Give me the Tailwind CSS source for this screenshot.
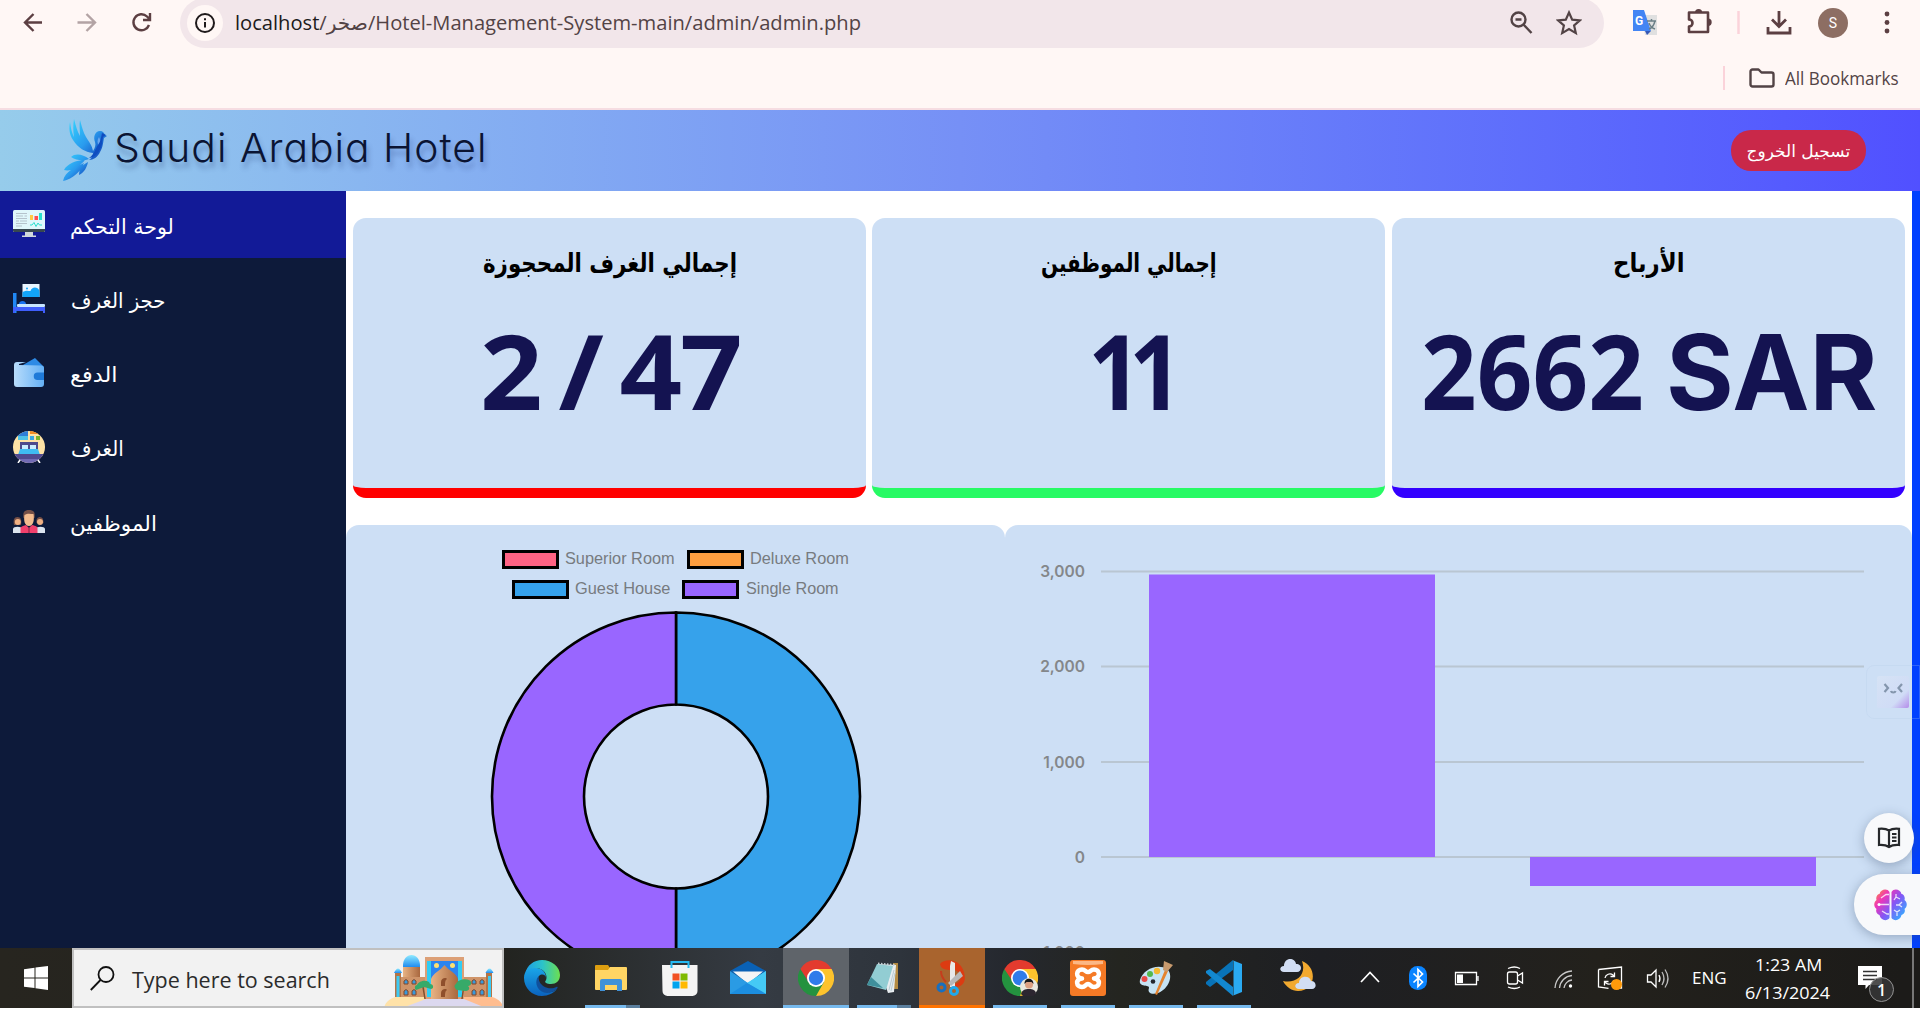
<!DOCTYPE html>
<html lang="ar" dir="ltr">
<head>
<meta charset="utf-8">
<title>Saudi Arabia Hotel</title>
<script src="https://cdn.jsdelivr.net/npm/@tailwindcss/browser@4"></script>
</head>
<body class="w-[1920px] h-[1018px] overflow-hidden bg-white font-['Open_Sans','Noto_Sans','DejaVu_Sans',sans-serif] flex flex-col">

<!-- Browser toolbar -->
<div class="h-[110px] shrink-0 bg-[#fff7f5] border-b-2 border-[#f6dde2] flex flex-col overflow-hidden">
  <div class="h-12 flex items-start">
    <svg class="w-[180px] h-12 shrink-0" viewBox="0 0 180 48" fill="none" stroke="#5c3f42" stroke-width="2.4">
      <path d="M42 22.500H26M33.500 14l-8.500 8.500 8.500 8.500"/>
      <path stroke="#b3a3a4" d="M77.500 22.500H94M86.500 14l8.500 8.500-8.500 8.500"/>
      <path d="M149 25a8 8 0 1 1-2-8.500l3 3M150 13v7h-7"/>
    </svg>
    <div class="w-[1424px] h-[50px] -mt-0.5 shrink-0 rounded-[25px] bg-[#f2e6ea] flex items-center">
      <div class="ml-[7px] size-9 rounded-full bg-[#fff7f5] flex items-center justify-center">
        <svg class="size-5" viewBox="0 0 20 20" fill="none" stroke="#1f1a1b" stroke-width="2"><circle cx="10" cy="10" r="9"/><path d="M10 9v5.500M10 5.200v2"/></svg>
      </div>
      <div data-fit class="ml-[12px] w-[626px] text-[20px] leading-[28px] text-[#524345]"><span class="text-[#201a1b]">localhost</span>/صخر/Hotel-Management-System-main/admin/admin.php</div>
      <svg class="ml-[649px] w-6 h-6" viewBox="0 0 24 24" fill="none" stroke="#524345" stroke-width="2.400"><circle cx="8.500" cy="8.500" r="7"/><path d="M13.500 13.500l8 8.500M5.500 8.500h6"/></svg>
      <svg class="ml-[22px] w-[26px] h-[26px]" viewBox="0 0 26 26" fill="none" stroke="#524345" stroke-width="2.200"><path d="M13 2.500l3.200 7.100 7.700.7-5.800 5.200 1.700 7.600L13 19.100l-6.800 4 1.700-7.600-5.800-5.200 7.700-.7z"/></svg>
    </div>
    <svg class="w-[316px] h-12 shrink-0" viewBox="1604 0 316 48">
      <path fill="#e0e0e0" d="M1641 15h16v20h-12z"/><path fill="#4285f4" d="M1633 10h11l7 21h-18z"/><path fill="#3557b5" d="M1645 31h6l-4 4z"/>
      <path fill="none" stroke="#6b7f86" stroke-width="1.500" d="M1647 21h9M1651.500 19v2M1655 21c-1 4-3 7-6 8M1649 23c1 3 3 5 6 6"/>
      <text x="1635" y="25" font-size="12" font-weight="700" fill="#fff" font-family="Roboto">G</text>
      <path fill="none" stroke="#5c3f42" stroke-width="2.600" stroke-linejoin="round" d="M1689 12.500h19V32h-19v-5.500a3.500 3.500 0 0 0 0-7z"/>
      <path fill="#5c3f42" d="M1695 12.500a3.600 3.600 0 0 1 7.200 0zM1708 18.500a3.700 3.700 0 0 1 0 7.400z"/>
      <path stroke="#fbd3da" stroke-width="2.500" d="M1738.500 11v23"/>
      <path fill="none" stroke="#5c3f42" stroke-width="2.800" d="M1779 11v15M1772 19.500l7 7 7-7M1768 27v6h22v-6"/>
      <circle cx="1833" cy="23" r="15" fill="#8d6e63"/><text x="1833" y="28" text-anchor="middle" font-size="14" fill="#fff" font-family="Roboto">S</text>
      <g fill="#5c3f42"><circle cx="1887" cy="14" r="2.400"/><circle cx="1887" cy="22.500" r="2.400"/><circle cx="1887" cy="31" r="2.400"/></g>
    </svg>
  </div>
  <div class="h-[60px] flex items-center justify-end pr-[21px]">
    <div class="w-0.5 h-6 bg-[#fbd3da]"></div>
    <svg class="ml-6 w-[26px] h-5" viewBox="0 0 26 20" fill="none" stroke="#524345" stroke-width="2.400" stroke-linejoin="round"><path d="M1.500 3.500A2 2 0 0 1 3.500 1.500h6l3 3h10a2 2 0 0 1 2 2v10a2 2 0 0 1-2 2h-19a2 2 0 0 1-2-2z"/></svg>
    <div data-fit class="ml-[10px] w-[114px] text-[17.500px] leading-6 text-[#524345]">All Bookmarks</div>
  </div>
</div>

<!-- Site header -->
<header class="h-[81px] shrink-0 bg-linear-to-r from-[#96cceb] via-[#7690f6] to-[#5150ff] flex items-center">
  <svg class="ml-[61px] w-[46px] h-[64px] -mt-1" viewBox="62 118 46 64">
    <defs><linearGradient id="wing" x1="0" y1="0" x2="1" y2="1"><stop offset="0" stop-color="#35d6ff"/><stop offset=".5" stop-color="#2a9bee"/><stop offset="1" stop-color="#0a2fae"/></linearGradient></defs>
    <path fill="url(#wing)" d="M71 123c1 7 2 11 4 15-1-6-1-12 0-18 2 7 3 12 6 17 0-6-1-11 0-16 2 7 3 12 6 17 3 5 6 8 7 14 2-3 3-6 2-9-2-5 0-11 5-11 3 0 4 2 5 4l2 1-3 2c-1 5-1 9-4 14-2 5-7 8-11 8 3-2 4-4 4-7-8-1-15-5-20-13-4-6-4-12-3-18z"/>
    <path fill="#6aa6ee" d="M100 138c-2 3-2 6 0 9 2-3 2-5 0-9z"/>
    <path fill="#0f4cc0" d="M103 134l4 2-3 2c-1 7-1 10-4 14-2 4-6 7-10 7 6-4 6-9 9-13 3-4 3-8 4-12z"/>
    <path fill="url(#wing)" d="M90 160c-6-5-14-6-18-2 6 4 13 4 18 2zM86 161c-9 0-18 4-21 10 8 2 16-4 21-10zM85 164c-8 4-19 8-21 18 10-2 18-10 21-18zM89 163c-6 3-9 7-9 13 5-2 8-8 9-13z"/>
  </svg>
  <div data-fit class="ml-[7px] -mt-1.5 w-[374px] text-[40px] leading-[50px] font-[350] font-['Inter',sans-serif] [font-feature-settings:'cv11','ss03'] text-[#0b1433] text-shadow-[2px_6px_5px_rgba(30,50,110,0.3)] tracking-wide">Saudi Arabia Hotel</div>
  <div class="ml-auto mr-[54px] w-[135px] h-[41px] rounded-[20px] bg-[#c92849] flex items-center justify-center">
    <div data-fit class="w-[104px] text-[17px] leading-6 text-white font-['DejaVu_Sans',sans-serif]">تسجيل الخروج</div>
  </div>
</header>

<!-- Dashboard -->
<div class="h-[757px] shrink-0 flex relative overflow-hidden bg-white">
  <nav class="w-[346px] shrink-0 bg-[#0d1a3a] text-white text-[21px] leading-[30px] flex flex-col gap-[7.300px] font-['DejaVu_Sans',sans-serif]">
    <a class="h-[67px] bg-[#121a97] flex items-center pl-[13px]">
      <svg class="w-8 h-8 -mt-1" viewBox="0 0 32 32"><rect y="3" width="32" height="22" rx="1.500" fill="#e0f7fb"/><path fill="#37474f" d="M0 22h32v1.500a1.500 1.500 0 0 1-1.500 1.500h-29A1.500 1.500 0 0 1 0 23.500z"/><path fill="#cfd8dc" d="M12 25h8v3.500h3V30H9v-1.500h3z"/><path stroke="#b5c3cc" d="M3 6.500h11M3 9h7M11.500 9h2.500M3 11.500h11M3 14h3M7 14h7M3 16.500h11M3 19h6"/><path fill="#ffca44" d="M17 8h3v5h-3z"/><path fill="#ff4f4f" d="M21.500 9h3.500v4h-3.500z"/><path fill="#2be0cf" d="M26 6h3v7h-3z"/><path fill="none" stroke="#2be0cf" d="M17 18h2l2-2.500 2 4 2-3.500 1.500 2H29"/></svg>
      <div data-fit class="ml-[25px] mt-1 w-[104px]">لوحة التحكم</div>
    </a>
    <a class="h-[67px] flex items-center pl-[13px]">
      <svg class="w-8 h-8 -mt-0.5" viewBox="0 0 32 32"><path fill="#e8f5ff" d="M9.500 2h17v13h-17z"/><path fill="#12a5fa" d="M9.500 10c4-2 6-1 8-1 1-4 7-5 9 0v6h-17z"/><circle cx="14" cy="6.500" r="1" fill="#12a5fa"/><path fill="#2088f5" d="M0 11h3.500v20H1.800L0 30z"/><path fill="#3f5efb" d="M0 25h32v6h-2v-2H2v2H0z"/><path fill="#1873f0" d="M6 22c0-4 7-4 7 0z"/><rect x="4" y="22" width="28" height="3" rx="1" fill="#c7e6ff"/></svg>
      <div data-fit class="ml-[26px] mt-1 w-[95px]">حجز الغرف</div>
    </a>
    <a class="h-[67px] flex items-center pl-[13px]">
      <svg class="w-8 h-8" viewBox="0 0 32 32"><defs><linearGradient id="wal"><stop stop-color="#b8dcfb"/><stop offset="1" stop-color="#64b0f5"/></linearGradient></defs><path fill="#2d8ae5" d="M10 8l12-7 9 9v8h-20z"/><path fill="url(#wal)" d="M4 5h9l-7 2v1l22 .5a3 3 0 0 1 3 3V27a3 3 0 0 1-3 3H4a3 3 0 0 1-3-3V8a3 3 0 0 1 3-3z"/><path fill="#1f7ad8" d="M24.500 15.500H31v7.500h-6.500a3.700 3.700 0 0 1 0-7.500z"/></svg>
      <div data-fit class="ml-[25px] mt-1 w-[47px]">الدفع</div>
    </a>
    <a class="h-[67px] flex items-center pl-[13px]">
      <svg class="w-8 h-8" viewBox="0 0 32 32"><clipPath id="rc"><circle cx="16" cy="16" r="16"/></clipPath><g clip-path="url(#rc)"><path fill="#fde2a5" d="M0 0h32v32H0z"/><path fill="#2f7fd8" d="M5 0h10v8H5z"/><path fill="#4fc3e8" d="M5 5h10v4H5z"/><path fill="#f08a24" d="M17 0h11v3H17z"/><path fill="#3aa7e0" d="M17 5h4v4h-4z"/><path fill="#7cb32a" d="M23 5h4v4h-4z"/><path fill="#4d4a8c" d="M7 11h18v8H7z"/><path fill="#c9ecff" d="M9 14h6v4H9zM17 14h6v4h-6z"/><path fill="#3fbcf2" d="M7 18h18l2 6H5z"/><path fill="#504a90" d="M0 23h32v5H0z"/><path fill="#716bb5" d="M0 28h32v4H0z"/></g><path stroke="#fff" stroke-width="1.500" d="M7 29l-2 3M25 29l2 3"/></svg>
      <div data-fit class="ml-[26px] mt-1 w-[53px]">الغرف</div>
    </a>
    <a class="h-[67px] flex items-center pl-[13px]">
      <svg class="w-8 h-8" viewBox="0 0 32 32"><path fill="#744f47" d="M1 19c-1-5 0-8 3.500-8S9 14 8 19zM23.500 17c-.5-4 1-6 3.500-6s3.500 2 3.500 6z"/><circle cx="4.800" cy="16" r="3" fill="#f0b183"/><circle cx="27" cy="16" r="3" fill="#f0b183"/><path fill="#dbe4ee" d="M0 27v-4c0-3 9-3 9 0v4zM23 27v-4c0-3 9-3 9 0v4z"/><path fill="#744f47" d="M10.500 12c-1-6 1-8 5.500-8s6.500 2 5.500 8z"/><path fill="#f3bb8e" d="M11.500 9c3-2 6-1 9-1 1 6 0 12-4.500 12s-5.500-6-4.500-11z"/><path fill="#f2406c" d="M7.500 27v-4.500c0-2 2-2.500 5.500-3.500l3 3 3-3c4 1 5.500 1.500 5.500 3.500V27z"/><path stroke="#7a2746" d="M16 22v5"/></svg>
      <div data-fit class="ml-[25px] mt-1 w-[87px]">الموظفين</div>
    </a>
  </nav>

  <main class="w-[1566px] shrink-0">
    <section class="pt-[27px] pl-[7px] flex gap-1.5 text-black text-center">
      <div class="w-[513px] h-[280px] rounded-[13px] bg-[#cddff5] border-b-[10px] border-[#ff0000] flex flex-col items-center">
        <div data-fit class="mt-[25px] w-[254px] h-10 text-[26px] leading-10 font-bold font-['DejaVu_Sans',sans-serif]">إجمالي الغرف المحجوزة</div>
        <div data-fit class="mt-[17px] w-[260px] h-[140px] text-[104px] leading-[140px] font-bold tracking-[-2px] [word-spacing:-8px] text-[#141351]">2 / 47</div>
      </div>
      <div class="w-[513px] h-[280px] rounded-[13px] bg-[#cddff5] border-b-[10px] border-[#27fa64] flex flex-col items-center">
        <div data-fit class="mt-[25px] w-[176px] h-10 text-[26px] leading-10 font-bold font-['DejaVu_Sans',sans-serif]">إجمالي الموظفين</div>
        <div data-fit class="mt-[17px] w-[82px] h-[140px] text-[104px] leading-[140px] font-bold tracking-[-14px] text-[#141351]">11</div>
      </div>
      <div class="ml-[1px] w-[513px] h-[280px] rounded-[13px] bg-[#cddff5] border-b-[10px] border-[#3300ff] flex flex-col items-center">
        <div data-fit class="mt-[25px] w-[72px] h-10 text-[26px] leading-10 font-bold font-['DejaVu_Sans',sans-serif]">الأرباح</div>
        <div class="mt-[17px] h-[140px] flex text-[#141351] leading-[140px] font-bold">
          <div data-fit class="w-[223px] text-[104px]">2662</div>
          <div data-fit class="ml-[22px] mt-0.5 w-[211px] text-[104px] font-['Inter',sans-serif]">SAR</div>
        </div>
      </div>
    </section>

    <section class="mt-[27px] flex h-[440px]">
      <div class="w-[658.500px] shrink-0 rounded-t-[13px] bg-[#cddff5] pt-[25px]">
        <div class="flex flex-col gap-[11px] text-[#777b80] text-[16px] leading-[17px] font-['Liberation_Sans',sans-serif]">
          <div class="h-[19px] flex pl-[155.500px]">
            <span class="w-[57px] h-[19px] border-[3px] border-black bg-[#ff6384]"></span><span data-fit class="ml-[6.500px] w-[110px] block">Superior Room</span>
            <span class="ml-[12px] w-[57px] h-[19px] border-[3px] border-black bg-[#ff9f40]"></span><span data-fit class="ml-[6px] w-[99px] block">Deluxe Room</span>
          </div>
          <div class="h-[19px] flex pl-[165.500px]">
            <span class="w-[57px] h-[19px] border-[3px] border-black bg-[#36a2eb]"></span><span data-fit class="ml-[6.500px] w-[95px] block">Guest House</span>
            <span class="ml-[12px] w-[57px] h-[19px] border-[3px] border-black bg-[#9966ff]"></span><span data-fit class="ml-[6.500px] w-[93px] block">Single Room</span>
          </div>
        </div>
        <svg class="mt-[11px] ml-[144px] w-[372px] h-[372px]" viewBox="0 0 372 372" stroke="#000" stroke-width="2.600">
          <path fill="#36a2eb" d="M186 2.500a184 184 0 0 1 0 368V278.500a92 92 0 0 0 0-184z"/>
          <path fill="#9966ff" d="M186 2.500a184 184 0 0 0 0 368V278.500a92 92 0 0 1 0-184z"/>
        </svg>
      </div>
      <div class="w-[907.500px] shrink-0 rounded-t-[13px] bg-[#cddff5]">
        <svg class="w-[907px] h-[440px]" viewBox="1005 525 907 440">
          <g stroke="#b9c6d2" stroke-width="1.800"><path d="M1101 571.500h763M1101 666.500h763M1101 762h763M1101 857h763"/></g>
          <path fill="#9966ff" d="M1149 574.500h286V857h-286zM1530 857h286v29h-286z"/>
          <g font-family="Inter" font-size="15.500" font-weight="600" fill="#84878a" text-anchor="end"><text x="1085" y="577">3,000</text><text x="1085" y="672">2,000</text><text x="1085" y="767.500">1,000</text><text x="1085" y="862.500">0</text><text x="1085" y="957.500">-1,000</text></g>
        </svg>
      </div>
    </section>
  </main>
  <div class="w-2 shrink-0 bg-[#0040ff]"></div>

  <!-- Floating helpers -->
  <div class="absolute right-0 top-[474px] w-[54px] h-[54px] rounded-l-lg border border-[#b5cde8]/25 pl-[10px] pt-[10px]">
    <svg class="size-8" viewBox="0 0 32 32"><defs><linearGradient id="face" x1="0" y1="0" x2="1" y2="1"><stop stop-color="#d6e3f5"/><stop offset=".7" stop-color="#d0dcf6"/><stop offset="1" stop-color="#b48cea"/></linearGradient></defs><rect width="32" height="32" rx="2" fill="url(#face)"/><path fill="none" stroke="#8496ad" stroke-width="2.200" d="M7.500 8l3.500 4-3.500 4M25 8l-3.500 4 3.500 4M14 15c.5 2 4 2 4.500 0"/></svg>
  </div>
  <div class="absolute left-[1864px] top-[622px] size-[50px] rounded-full bg-[#f8f9fb] shadow-[0_3px_12px_rgba(60,80,110,0.4)] flex items-center justify-center">
    <svg class="w-6 h-6" viewBox="0 0 24 24" fill="none" stroke="#26282b" stroke-width="2.200"><path d="M12 4.500C9 2.500 5 2.500 2 2.800V19c4-.3 7 0 10 2 3-2 6-2.300 10-2V2.800c-3-.3-7-.3-10 1.700zM12 4.500V22M15 8h4.500M15 11.500h4.500M15 15h4.500"/></svg>
  </div>
  <div class="absolute left-[1854px] top-[683px] w-[74px] h-[61px] rounded-l-[30px] bg-[#f8f9fb] shadow-[0_2px_12px_rgba(60,80,110,0.4)] flex items-center pl-[20px]">
    <svg class="w-[33px] h-[32px]" viewBox="0 0 33 32"><defs><linearGradient id="br" x1="0" y1="0" x2="1" y2=".8"><stop stop-color="#ff9a2a"/><stop offset=".3" stop-color="#ee35b8"/><stop offset=".6" stop-color="#8457f5"/><stop offset="1" stop-color="#32b0ff"/></linearGradient></defs><path fill="url(#br)" d="M15.500 3v26c-3 4-9 2-10-3-3-1-4-4-3-6-3-2-3-7 0-9-1-3 1-6 3-6 1-5 8-6 10-2zM17.500 3v26c3 4 9 2 10-3 3-1 4-4 3-6 3-2 3-7 0-9 1-3-1-6-3-6-1-5-8-6-10-2z"/><g fill="none" stroke="#fff" stroke-opacity=".8" stroke-width="1.300"><path d="M15 5.500h-3L7 9M5 15.500h10M8 22l5 3h2M22 5v3l-2 3M22 8l4 2M28 13l-3 3 3 2M25 16h-3M20 21l3 2 3-2M23 23v4"/></g><circle cx="5" cy="15.500" r="1.500" fill="#fff"/></svg>
  </div>
</div>

<!-- Taskbar -->
<div class="h-[60px] shrink-0 flex text-white bg-[linear-gradient(90deg,#27251f_0px,#22231f_500px,#353b43_760px,#2e343c_900px,#25282e_1010px,#242520_1120px,#1e1f23_1320px,#23211c_1600px,#1c1b19_1900px)]">
  <div class="w-[72px] shrink-0 flex items-center justify-center"><svg class="size-6" viewBox="0 0 24 24" fill="#fff"><path d="M0 3.300l10.500-1.500v9.700H0zM11.500 1.600L24 0v11.500H11.500zM0 12.500h10.500v9.600L0 20.700zM11.500 12.500H24V24l-12.500-1.700z"/></svg></div>
  <div class="w-[432px] shrink-0 border-2 border-[#c0c0c0] bg-[#f2f2f2] flex items-center overflow-hidden">
    <svg class="ml-4 size-[25px] shrink-0" viewBox="0 0 25 25" fill="none" stroke="#111" stroke-width="1.800"><circle cx="16" cy="8.500" r="7.500"/><path d="M10.500 14L.8 24"/></svg>
    <div data-fit class="ml-[17px] mt-1 w-[198px] text-[21.500px] leading-8 text-[#2b2b2b]">Type here to search</div>
    <svg class="ml-auto -mr-0.5 w-[120px] h-[56px] shrink-0" viewBox="384 950 120 56">
      <defs><linearGradient id="dome" x1="0" y1="0" x2="0" y2="1"><stop stop-color="#8eeaff"/><stop offset="1" stop-color="#208cf0"/></linearGradient><linearGradient id="stone"><stop stop-color="#e8b384"/><stop offset="1" stop-color="#a9683f"/></linearGradient></defs>
      <path fill="#ffe2a8" d="M384 1008c2-9 12-13 24-12h30l-20 12z"/><path fill="#ffbd8f" d="M504 1008c-3-9-12-13-24-12h-34l28 12z"/>
      <path fill="#cf9469" d="M395 977h96v20h-96z"/><path fill="url(#stone)" d="M403 966h17v11h-17z"/><path fill="url(#dome)" d="M403 967c-1-16 18-16 17 0z"/>
      <path fill="#dca077" d="M425 957h39v42h-39z"/><path fill="#2b84f0" d="M429 961h31v36h-31z"/><path fill="#30cdf4" d="M427 961h4v36h-4zM458 961h4v36h-4z"/><circle cx="436.500" cy="965.500" r="2.500" fill="#ffe070"/><circle cx="452.500" cy="965.500" r="2.500" fill="#ffe070"/>
      <path fill="url(#stone)" d="M431 999v-20c2-6 9-8 13.500-14 4.500 6 12 8 13.500 14v20z"/>
      <g fill="#8f4f2c"><path d="M441 986v-4c0-4 5-5 6-3-2 1-2 4-2 7zM441 997v-4c0-4 5-5 6-3-2 1-2 4-2 7z"/></g>
      <g fill="#3899dc" stroke="#864726" stroke-width="1"><path d="M404 984v-3q2-3 4 0v3zM412 984v-3q2-3 4 0v3zM404 995v-4q2-3 4 0v4zM412 995v-4q2-3 4 0v4zM472 984v-3q2-3 4 0v3zM480 984v-3q2-3 4 0v3zM472 995v-4q2-3 4 0v4zM480 995v-4q2-3 4 0v4z"/></g>
      <path fill="#b27448" d="M395 973h6v24h-6zM486 973h6v24h-6z"/><path fill="#3ccaf3" d="M396.500 976h3v21h-3zM488 976h3v21h-3z"/><path fill="url(#dome)" d="M394 973q4-9 8 0zM485.500 973q4-9 8 0z"/>
      <path stroke="#80502f" stroke-width="1.500" d="M425 999l-2-12M462 999l2-14"/><path fill="#37aa69" d="M417 985c2-5 12-6 13-1 4 0 4 5 1 5l-7-2-8 3c-2-2-1-5 1-5zM456 984c2-6 14-6 15-2 1 3-2 4-3 4 3 3 0 5-3 5l-8-1c-3-2-3-5-1-6z"/>
      <path fill="#dcd8ef" d="M402 1008l24-9h38l22 9z"/>
    </svg>
  </div>
  <div class="w-1.5 shrink-0"></div>
  <div class="w-[68px] shrink-0 flex items-center pl-3.5"><svg class="size-9" viewBox="0 0 36 36"><defs><linearGradient id="e1" x1="0" x2="1"><stop stop-color="#1c9de8"/><stop offset=".5" stop-color="#2cc3c9"/><stop offset="1" stop-color="#6cdf50"/></linearGradient><linearGradient id="e2" x1="0" y1="0" x2="0" y2="1"><stop stop-color="#1aa6e8"/><stop offset="1" stop-color="#0a62bd"/></linearGradient></defs><path fill="url(#e2)" d="M0 18C0 10 6 7 13 8c6 1 9 5 9 10 0-3-4-5-7-2-4 4 0 14 9 16 3 .6 7-1 9-3-3 4-9 7-15 7C8 36 0 28 0 18z"/><path fill="#10509c" d="M15 16c-5 4-3 14 5 16.500 5 1.500 11-1 13.500-4.500.5-1-.5-1.600-1.200-1-3 1.800-9 1.800-12.300-.5C16 24 14 20 15 16z"/><path fill="url(#e1)" d="M1 14C3 5 10 0 18 0c10 0 18 7 18 15 0 6-4 9-9 9-4 0-7-1.500-5.500-3 2-3 1-8-3-11C13 6 3 8 1 14z"/></svg></div>
  <div class="w-[68px] shrink-0 flex flex-col items-center"><svg class="mt-[15px] -ml-0.5 w-8 h-[30px]" viewBox="0 0 32 30"><path fill="#dd9e10" d="M0 3a1 1 0 0 1 1-1h12l2 3v4H0z"/><path fill="#ffd564" d="M0 7h13l2-3h16a1 1 0 0 1 1 1v21a1 1 0 0 1-1 1H1a1 1 0 0 1-1-1z"/><path fill="#4092d9" d="M5 28V18a2 2 0 0 1 2-2h18a2 2 0 0 1 2 2v10h-5v-6H10v6z"/></svg><div class="mt-3 h-[3px] w-[55px] bg-[linear-gradient(90deg,#76b9ed_41px,#5b7f9e_41px)]"></div></div>
  <div class="w-[68px] shrink-0 flex items-center justify-center"><svg class="w-9 h-9" viewBox="0 0 36 36"><path fill="none" stroke="#25b9f2" stroke-width="2" d="M9.500 9V2h17v7"/><path fill="#f4f4f4" d="M0 5h35.500v26a5 5 0 0 1-5 5h-25a5 5 0 0 1-5-5z"/><path fill="#f25022" d="M10.500 13.500h7v7h-7z"/><path fill="#7fba00" d="M18.500 13.500h7v7h-7z"/><path fill="#00a4ef" d="M10.500 21.500h7v7h-7z"/><path fill="#ffb900" d="M18.500 21.500h7v7h-7z"/><path stroke="#25b9f2" stroke-width="2" d="M9.500 5v3M26.500 5v3"/></svg></div>
  <div class="w-[68px] shrink-0 flex items-center justify-center"><svg class="w-9 h-9" viewBox="0 0 36 36"><path fill="#0a61b5" d="M0 11L18 1l18 10-18 12z"/><path fill="#f5f5f5" d="M3 11.500h30L18 24z"/><path fill="#2a9be4" d="M0 11l18 12 18-12v23H0z"/><path fill="#45caf5" d="M36 11L17 23l19 11z"/><path fill="#1c8ee0" d="M0 34h36L17 23z"/></svg></div>
  <div class="w-[68px] shrink-0 flex justify-center"><div class="w-[66px] bg-[#5f646a] border-b-[3px] border-[#76b9ed] flex justify-center pt-3"><svg class="size-9" viewBox="0 0 36 36"><path fill="#e33b2e" d="M2.400 9A18 18 0 0 1 33.600 9L18 18z"/><path fill="#fdc32d" d="M33.600 9A18 18 0 0 1 18 36l3-18-3-9z"/><path fill="#24923f" d="M2.400 9A18 18 0 0 0 18 36l8-14-8-4-8 4z"/><path fill="#e33b2e" d="M2.400 9h31.200H18l-7 13z"/><circle cx="18" cy="18" r="9" fill="#fff"/><circle cx="18" cy="18" r="7.200" fill="#2f7bea"/></svg></div></div>
  <div class="w-[68px] shrink-0 flex flex-col items-center"><svg class="mt-3 w-9 h-9" viewBox="0 0 36 36"><path fill="#b48b42" d="M27 3h5v26h-4z"/><path fill="#e8edf0" d="M12 4l18 1-2 27-6 1z"/><path fill="#92cdd3" d="M11 4l16 2-7 24-19-5z"/><path fill="#3f8f9b" d="M5 17l12 11L1 25z"/><path stroke="#c5d1d6" stroke-width="2" stroke-dasharray="1.500 1.500" d="M12 3.500l17 1.500"/><path stroke="#b9cdd4" d="M28 10l-5 20M29 13l-4 18"/></svg><div class="mt-[9px] h-[3px] w-[54px] bg-[linear-gradient(90deg,#76b9ed_40px,#5b7f9e_40px)]"></div></div>
  <div class="w-[68px] shrink-0 flex justify-center"><div class="w-[66px] bg-[#a9642e] border-b-[3px] border-[#ff7300] flex justify-center pt-3"><svg class="size-9" viewBox="0 0 36 36"><path fill="#dc3b12" d="M6 4c4-5 15-5 20 1 5 5 9 20-3 22-5 1-4-3 0-4 5-2 5-10-2-13-5 0-14 1-15-6z"/><path fill="none" stroke="#c63d1c" stroke-width="2" d="M7 11c0 5 2 8 5 11"/><path fill="#e8e8e8" d="M17 1l4 2v24h-5V6z"/><path fill="#b8b8b8" d="M26 11l3 5-12 10-3-3z"/><g fill="none" stroke-width="3"><circle cx="7.500" cy="27.500" r="3.500" stroke="#176fc0"/><circle cx="20" cy="31" r="3.500" stroke="#20a9eb"/></g></svg></div></div>
  <div class="w-[68px] shrink-0 flex flex-col items-center"><svg class="mt-3 size-9" viewBox="0 0 36 36"><path fill="#24923f" d="M2.400 9A18 18 0 0 0 18 36l8-14z"/><path fill="#fdc32d" d="M33.600 9A18 18 0 0 1 18 36l6-18-6-9z"/><path fill="#e33b2e" d="M2.400 9A18 18 0 0 1 33.600 9H18l-7 13z"/><circle cx="18" cy="18" r="9" fill="#fff"/><circle cx="18" cy="18" r="7.400" fill="#2f7bea"/><circle cx="27" cy="27" r="9" fill="#e9e8df"/><path fill="#2c2630" d="M19 34c1-4 4-5 8-5s6 1 7 4a9 9 0 0 1-15 1z"/><circle cx="27" cy="24.500" r="4" fill="#dca083"/><path fill="#17171a" d="M22.500 24c-.5-7 9-7 9 0l-2-2h-5z"/></svg><div class="mt-[9px] h-[3px] w-[54px] bg-[#76b9ed]"></div></div>
  <div class="w-[68px] shrink-0 flex flex-col items-center"><svg class="mt-3 size-9" viewBox="0 0 36 36"><rect width="36" height="36" rx="3" fill="#f57a26"/><path fill="#fcb784" d="M3 1h30v3q-15 2-30 0z"/><path fill="none" stroke="#fff" stroke-width="4.500" stroke-linejoin="round" d="M12 18.500c-7-1-6-9 0-9 3.500 0 3.500 2.500 6 2.500s2.500-2.500 6-2.500c6 0 7 8 0 9 7 1 6 8.500 0 8.500-3.500 0-3.500-3-6-3s-2.500 3-6 3c-6 0-7-7.500 0-8.500z"/></svg><div class="mt-[9px] h-[3px] w-[54px] bg-[#76b9ed]"></div></div>
  <div class="w-[68px] shrink-0 flex flex-col items-center"><svg class="mt-3 size-9" viewBox="0 0 36 36"><path fill="#c6e3f4" d="M2 20C5 9 20 3 29 9c7 6 2 20-9 24-6 2-11 0-9-5 1-4-11 0-9-8z"/><circle cx="6.500" cy="19" r="3" fill="#e84a47"/><circle cx="12" cy="14" r="3" fill="#53b84d"/><circle cx="19" cy="11" r="3.200" fill="#f4b831"/><circle cx="15" cy="21.500" r="2.300" fill="#23272f"/><path fill="#e48430" d="M27 10l3 1-11 24-2-1z"/><path fill="#c79a6e" d="M26 1l9 4-6 7-4-2z"/></svg><div class="mt-[9px] h-[3px] w-[54px] bg-[#76b9ed]"></div></div>
  <div class="w-[68px] shrink-0 flex flex-col items-center"><svg class="mt-3 size-9" viewBox="0 0 36 36"><path fill="#0873b8" d="M27 0v10L4 27l-4-3v-2z"/><path fill="#1288d0" d="M4 9L27 27v9L0 13v-2z"/><path fill="#2aaaf2" d="M26 0l10 4v28l-10 4c1 0 1.500-1 1.500-2V2c0-1-.5-2-1.500-2z"/></svg><div class="mt-[9px] h-[3px] w-[54px] bg-[#76b9ed]"></div></div>
  <div class="w-[80px] shrink-0 flex items-center justify-center"><svg class="size-9 -mt-1" viewBox="0 0 36 36"><path fill="#f2a92f" d="M22 3c16 6 14 30-4 30-6 0-12-4-15-10 13 3 24-6 19-20z"/><path fill="#d2def4" d="M4 14c-5 0-5-6 0-6 0-9 11-9 12-2 7 0 6 8 1 8zM19 31c-5 0-5-6 0-6 0-8 11-8 12-2 6 0 6 8 1 8z"/></svg></div>
  <!-- System tray -->
  <svg class="w-[346px] h-[60px] shrink-0" viewBox="1338 948 346 60" fill="none" stroke="#fff" stroke-width="1.300">
    <path stroke-width="1.700" d="M1361 982l9-9.500 9 9.500"/>
    <rect x="1409" y="966" width="18" height="24" rx="8.500" fill="#0a84ff" stroke="none"/><path stroke-width="1.700" d="M1413.500 973.500l9 8.500-4.500 4.500v-17l4.500 4.500-9 8.500"/>
    <path d="M1455.500 972.500h21v12h-21zM1478 976v5"/><path fill="#fff" stroke="none" d="M1457 974.500h6v8.500h-6z"/>
    <rect x="1507.500" y="972" width="10" height="12" rx="2"/><path d="M1517.500 976l5-3v10l-5-3M1508 968.500q6.500-3 12 0M1508 987q6.500 3 12 0"/>
    <path stroke="#c8c8c8" d="M1555 988a18 18 0 0 1 17-17M1559.500 988a13.500 13.500 0 0 1 12.500-12.500M1564 988a9 9 0 0 1 8-8"/><circle cx="1570.500" cy="986" r="1.700" fill="#fff" stroke="none"/>
    <path d="M1598.500 969.500l23-2.500v21h-8M1598.500 969.500V987l10 1.300M1605 978a5 5 0 0 1 8-3l1.500 1.500M1614.500 972.500v4h-4M1614 980a5 5 0 0 1-8 3l-1.500-1.500M1604.500 985.500v-4h4"/><circle cx="1616.500" cy="984.500" r="5.500" fill="#ff9a0a" stroke="none"/>
    <path d="M1647.500 975h3.500l5-5v17l-5-5h-3.500zM1659 975q2 3.500 0 7"/><path stroke="#bbb" d="M1662 972q4 6.500 0 13M1665 969.500q6 9 0 18"/>
  </svg>
  <div class="w-[52px] shrink-0 pl-2 flex items-center"><div data-fit class="w-[34.500px] text-[16.500px] leading-6">ENG</div></div>
  <div class="w-[100px] shrink-0 pt-[3px] flex flex-col items-center text-[16.500px] leading-[27.500px]"><div data-fit class="w-[67px] ml-[4px]">1:23 AM</div><div data-fit class="w-[85px] ml-[3px]">6/13/2024</div></div>
  <svg class="w-[84px] h-[60px] shrink-0" viewBox="1836 948 84 60"><path fill="#fff" d="M1858 966h24v19h-13l-3.500 4v-4h-7.500z"/><path stroke="#333" stroke-width="1.300" d="M1863 971.500h14M1863 975.500h14M1863 979.500h14"/><circle cx="1881.500" cy="989.500" r="12" fill="#353535" fill-opacity=".88" stroke="#929292"/><text x="1881.500" y="995.500" text-anchor="middle" font-size="16" font-weight="600" fill="#fff" font-family="Open Sans">1</text><path stroke="#777" stroke-width="2" d="M1913 948v60"/></svg>
</div>
<script>
// Stretch or squeeze each label so it fills the width of its box, again whenever either one changes size.
const fits = [];
const fitAll = () => fits.forEach(([box, inner]) => {
  const w = inner.offsetWidth;
  if (w) inner.style.transform = 'scaleX(' + box.clientWidth / w + ')';
});
const watcher = new ResizeObserver(fitAll);
document.querySelectorAll('[data-fit]').forEach(box => {
  const inner = document.createElement('span');
  inner.style.cssText = 'display:inline-block;white-space:nowrap;transform-origin:0 50%';
  while (box.firstChild) inner.appendChild(box.firstChild);
  box.style.textAlign = 'left';
  box.style.whiteSpace = 'nowrap';
  box.style.flexShrink = '0';
  box.appendChild(inner);
  fits.push([box, inner]);
  watcher.observe(box);
  watcher.observe(inner);
});
window.addEventListener('load', fitAll);
fitAll();
</script>
</body>
</html>
